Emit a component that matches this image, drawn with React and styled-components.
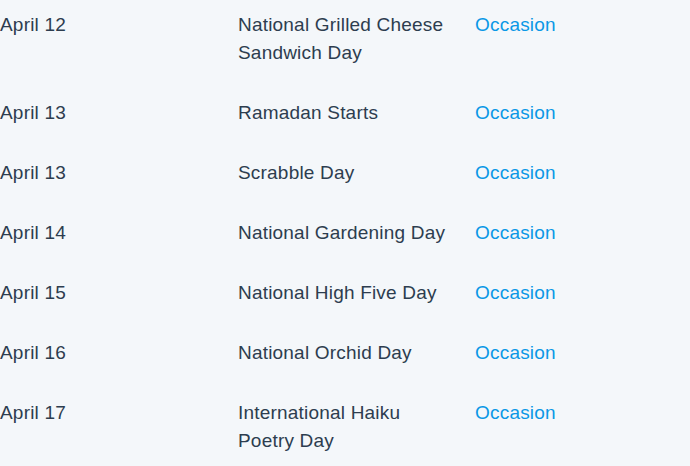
import React from 'react'
import styled, { createGlobalStyle } from 'styled-components'

const GlobalStyle = createGlobalStyle`
  html, body {
    margin: 0;
    padding: 0;
    background: #f4f7fa;
  }
  body {
    font-family: "Liberation Sans", Arial, Helvetica, sans-serif;
    -webkit-font-smoothing: antialiased;
  }
`

const List = styled.div`
  padding-top: 11px;
  display: flex;
  flex-direction: column;
  gap: 32px;
  min-height: 466px;
  box-sizing: border-box;
`

const Row = styled.div`
  display: grid;
  grid-template-columns: 238px 237px 1fr;
  font-size: 19px;
  letter-spacing: 0.2px;
  line-height: 28px;
  color: #2d3d4f;
`

const DateCell = styled.div`
  padding-right: 20px;
`

const NameCell = styled.div`
  padding-right: 24px;
`

const TypeLink = styled.a`
  color: #0a98e6;
  text-decoration: none;
  cursor: pointer;
`

const events = [
  { date: 'April 12', name: 'National Grilled Cheese Sandwich Day' },
  { date: 'April 13', name: 'Ramadan Starts' },
  { date: 'April 13', name: 'Scrabble Day' },
  { date: 'April 14', name: 'National Gardening Day' },
  { date: 'April 15', name: 'National High Five Day' },
  { date: 'April 16', name: 'National Orchid Day' },
  { date: 'April 17', name: 'International Haiku Poetry Day' },
]

export default function App() {
  return (
    <>
      <GlobalStyle />
      <List>
        {events.map((e, i) => (
          <Row key={i}>
            <DateCell>{e.date}</DateCell>
            <NameCell>{e.name}</NameCell>
            <div>
              <TypeLink>Occasion</TypeLink>
            </div>
          </Row>
        ))}
      </List>
    </>
  )
}
